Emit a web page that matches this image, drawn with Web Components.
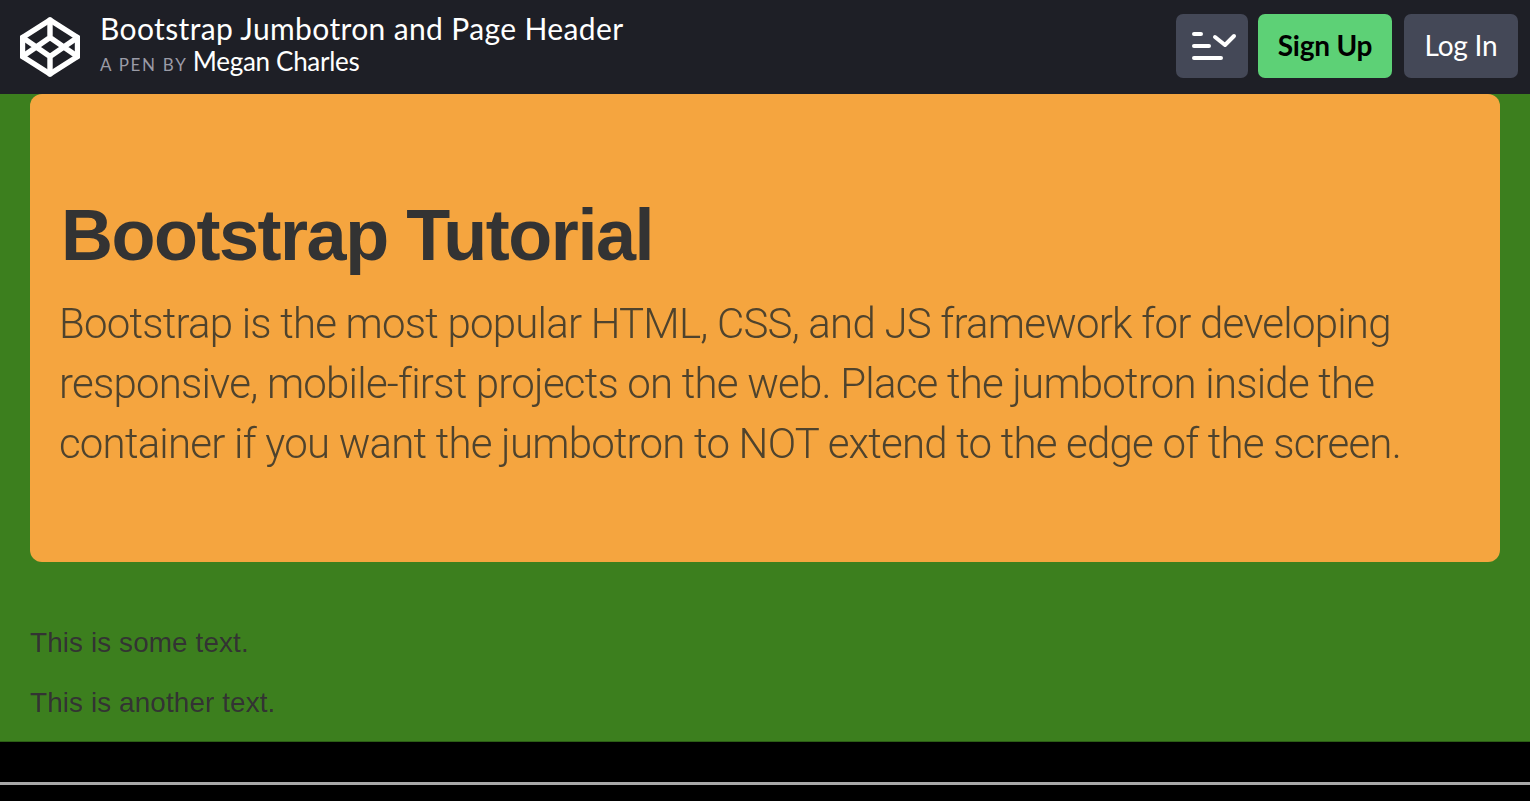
<!DOCTYPE html>
<html><head><meta charset="utf-8"><style>
html,body{margin:0;padding:0;background:#000;height:100%;overflow:hidden}
body{display:flex;flex-direction:column;height:801px}
</style></head><body>
<pen-header></pen-header>
<pen-stage>
<jumbo-card heading="Bootstrap Tutorial"><span>Bootstrap is the most popular HTML, CSS, and JS framework for developing</span><br><span>responsive, mobile-first projects on the web. Place the jumbotron inside the</span><br><span>container if you want the jumbotron to NOT extend to the edge of the screen.</span></jumbo-card>
<text-line>This is some text.</text-line>
<text-line>This is another text.</text-line>
</pen-stage>
<pen-footer></pen-footer>
<script>
function def(name,html,init){customElements.define(name,class extends HTMLElement{constructor(){super();this.attachShadow({mode:'open'}).innerHTML=html;}connectedCallback(){if(init)init(this)}})}
def('pen-logo',`<style>:host{display:block;width:60px;height:60px}svg{display:block}</style>
<svg width="60" height="60" viewBox="0 0 60 60" fill="none" stroke="#fff" stroke-width="5.400" stroke-linejoin="round" stroke-linecap="round"><path d="M30 3L57.500 20.500V39.500L30 57L2.500 39.500V20.500Z"/><path d="M30 3V20.500M30 39.500V57M2.500 20.500L30 39.500L57.500 20.500M2.500 39.500L30 20.500L57.500 39.500" /></svg>`);
def('pen-button',`<style>:host{display:flex;align-items:center;justify-content:center;height:64px;box-sizing:border-box;border-radius:7px;background:#444857;color:#fff;font:400 28px/1 Lato,sans-serif;letter-spacing:-.2px}
:host([kind=green]){background:#5dd176;color:#000;font-weight:700}
span{display:block;margin-top:-2px}</style><span><slot></slot></span>`);
def('pen-header',`<style>:host{display:flex;align-items:center;height:94px;background:#1e1f26;flex:none;padding:0 12px 0 20px;box-sizing:border-box;font-family:Lato,sans-serif}
.t{margin-left:20px;flex:1;display:flex;flex-direction:column;margin-top:-5px}
h1{margin:0;font:400 30px/36px Lato,sans-serif;color:#fff;letter-spacing:.37px}
.by{font-size:26px;line-height:28px;color:#fff;white-space:nowrap;margin-top:1px;letter-spacing:-.3px}
.by small{font-size:17px;color:#9a9ba6;letter-spacing:1.7px;text-transform:uppercase;margin-right:-1px}
.b{display:flex;margin-top:-2px}
.menu{width:72px}.su{width:134px;margin:0 12px 0 10px}.li{width:114px}
svg{display:block;margin-top:2px}</style>
<pen-logo></pen-logo>
<div class="t"><h1>Bootstrap Jumbotron and Page Header</h1><div class="by"><small>A pen by</small> Megan Charles</div></div>
<div class="b"><pen-button class="menu"><svg width="46" height="30" viewBox="0 0 46 30" fill="none" stroke="#fff" stroke-width="4" stroke-linecap="round" stroke-linejoin="round" style="overflow:visible"><path d="M5 3H12M5 15H20M5 27H32M26 6L36 14L45 5"/></svg></pen-button><pen-button kind="green" class="su">Sign Up</pen-button><pen-button class="li">Log In</pen-button></div>`);
def('pen-stage',`<style>:host{display:block;height:648px;flex:none;background:#3c7f1e;padding:0 30px;box-sizing:border-box;overflow:hidden;border-bottom:1px solid #2c5f15}</style><slot></slot>`);
def('jumbo-card',`<style>:host{display:block;height:468px;box-sizing:border-box;background:#f5a53f;border-radius:12px;padding:98px 30px 0 29px;color:#333;margin-bottom:61px}
h1{margin:0 0 0 2px;font:700 72px/86px "Liberation Sans",Arial,sans-serif;letter-spacing:-1.48px;color:#333;filter:blur(.7px)}
p{margin:0;font:300 42px/60px Roboto,"Liberation Sans",sans-serif;color:#4f432d;white-space:nowrap;padding-top:16px;letter-spacing:-.79px;filter:blur(.7px)}</style><h1></h1><p><slot></slot></p>`,e=>e.shadowRoot.querySelector('h1').textContent=e.getAttribute('heading'));
def('text-line',`<style>:host{display:block;font:400 28px/40px "Liberation Sans",Arial,sans-serif;letter-spacing:.05px;color:#333;margin-bottom:20px;filter:blur(.7px)}</style><slot></slot>`);
def('pen-footer',`<style>:host{display:block;flex:1;background:#000;padding-top:40px;box-sizing:border-box}div{height:3px;background:#a8a8a8}</style><div></div>`);
</script>
</body></html>
